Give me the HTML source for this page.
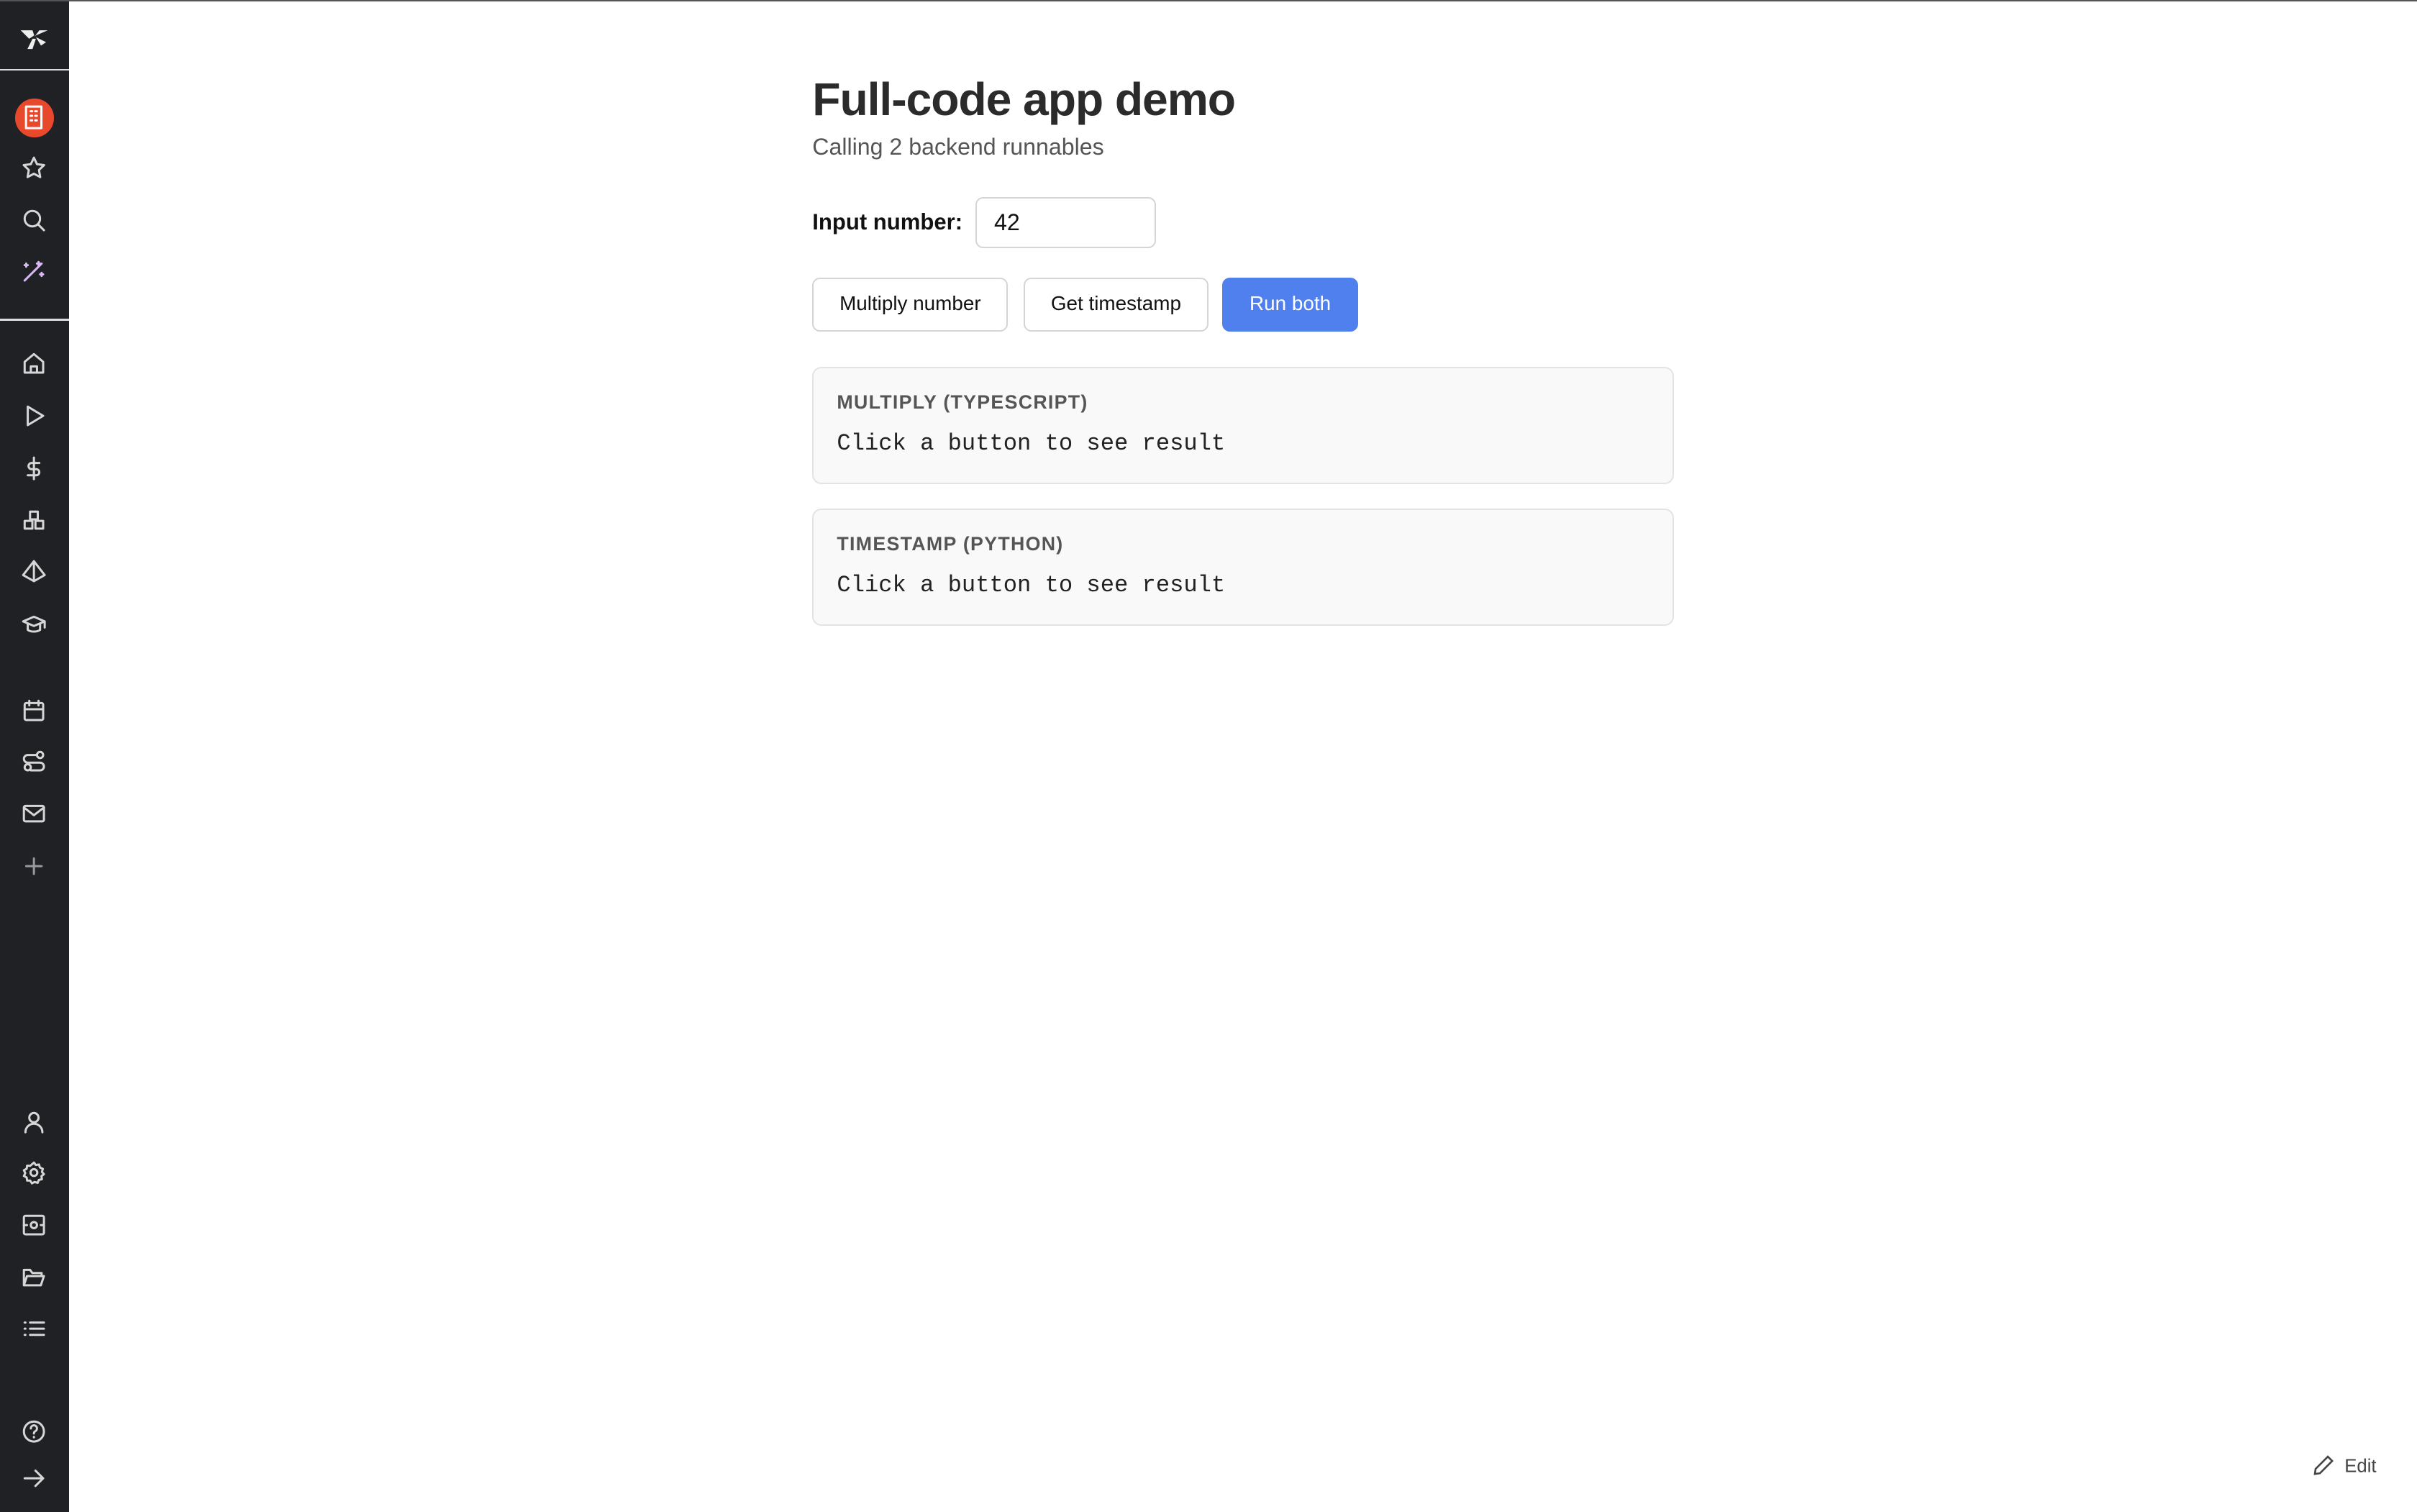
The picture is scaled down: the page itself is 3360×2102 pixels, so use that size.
<!DOCTYPE html>
<html><head><meta charset="utf-8"><style>
html{zoom:2.142857}
*{box-sizing:border-box;margin:0;padding:0}
body{width:1568px;height:980px;background:#fff;font-family:"Liberation Sans",sans-serif;position:relative;overflow:hidden;border-top:1px solid #555}
.sb{position:absolute;left:0;top:0;width:45px;height:980px;background:#202125}
.sb .hr{position:absolute;left:0;width:45px;height:1px;background:#ddd}
.ic{position:absolute;left:14px;width:16px;height:16px}
.ic svg{width:16px;height:16px;fill:none;stroke:#d6d6d6;stroke-width:1.4;stroke-linecap:round;stroke-linejoin:round}
h1{position:absolute;left:527px;top:46px;font-size:30px;font-weight:bold;color:#2b2b2b;letter-spacing:-0.5px}
.sub{position:absolute;left:527px;top:86px;font-size:15px;color:#555}
.lbl{position:absolute;left:527px;top:135px;font-size:14.5px;font-weight:bold;color:#111}
.inp{position:absolute;left:633px;top:127px;width:117px;height:33px;border:1px solid #d5d5d5;border-radius:5px;font-size:15px;padding:7px 11px;color:#111}
.btn{position:absolute;top:179px;height:35px;border:1px solid #d5d5d5;border-radius:5px;font-size:13px;color:#111;text-align:center;line-height:32px;background:#fff}
.card{position:absolute;left:527px;width:559px;height:76px;background:#f9f9f9;border:1px solid #e3e3e3;border-radius:6px}
.card .t{position:absolute;left:15px;top:15px;font-size:12.5px;font-weight:bold;color:#555;letter-spacing:0.6px}
.card .r{position:absolute;left:15px;top:40px;font-family:"Liberation Mono",monospace;font-size:15px;color:#222}
.edit{position:absolute;left:1500px;top:942px;font-size:12px;color:#444}
</style></head><body>
<div class="sb">
<div class="ic" style="top:12px;left:11px;width:22px;height:22px"><svg viewBox="0 0 20 20" style="width:22px;height:22px;stroke:none;fill:#eee"><path d="M2 6 L9 6 L10 9 L7 11 Z M18 6 L11 9 L10 10 L13 6 Z M6 17 L9 11 L11 11 L9 17Z M11 10 L17 13 L14 15 Z"/></svg></div>
<div class="hr" style="top:44px"></div>
<div style="position:absolute;left:10px;top:63px;width:25px;height:25px;border-radius:50%;background:#e8482c"></div>
<div class="ic" style="top:67px;left:16px;width:12px;height:16px"><svg viewBox="0 0 12 16" style="width:12px;height:16px"><rect x="1" y="1" width="10" height="14" stroke="#fff"/><path d="M4 4h1M7 4h1M4 7h1M7 7h1M4 10h1M7 10h1" stroke="#fff"/></svg></div>
<div class="ic" style="top:100px"><svg viewBox="0 0 16 16"><path d="M8 1.5l2 4.2 4.6.6-3.3 3.2.8 4.6L8 11.9 3.9 14.1l.8-4.6L1.4 6.3 6 5.7z"/></svg></div>
<div class="ic" style="top:134px"><svg viewBox="0 0 16 16"><circle cx="7" cy="7" r="5"/><path d="M11 11l3.5 3.5"/></svg></div>
<div class="ic" style="top:167px"><svg viewBox="0 0 16 16" style="stroke:#d9b8f5"><path d="M2 14L13 3M11 2v2M10 3h2M3 3v2M2 4h2M13 9v2M12 10h2"/></svg></div>
<div class="hr" style="top:206px"></div>
<div class="ic" style="top:227px"><svg viewBox="0 0 16 16"><path d="M2 7l6-5 6 5v7H2z M6 14v-4h4v4"/></svg></div>
<div class="ic" style="top:261px"><svg viewBox="0 0 16 16"><path d="M4 2l10 6-10 6z"/></svg></div>
<div class="ic" style="top:295px"><svg viewBox="0 0 16 16"><path d="M8 1v14M11.5 4.5H6.5a2 2 0 000 4h3a2 2 0 010 4H4"/></svg></div>
<div class="ic" style="top:329px"><svg viewBox="0 0 16 16"><rect x="5.5" y="2" width="5" height="5"/><rect x="2" y="8" width="5" height="5"/><rect x="9" y="8" width="5" height="5"/></svg></div>
<div class="ic" style="top:362px"><svg viewBox="0 0 16 16"><path d="M8 1L1 10l7 4 7-4zM8 1v13"/></svg></div>
<div class="ic" style="top:396px"><svg viewBox="0 0 16 16"><path d="M1 6l7-3 7 3-7 3zM4 7.5v4c2 1.5 6 1.5 8 0v-4M15 6v4"/></svg></div>
<div class="ic" style="top:452px"><svg viewBox="0 0 16 16"><rect x="2" y="3" width="12" height="11" rx="1"/><path d="M2 7h12M5 1.5v3M11 1.5v3"/></svg></div>
<div class="ic" style="top:485px"><svg viewBox="0 0 16 16"><circle cx="4" cy="12" r="2"/><circle cx="12" cy="4" r="2"/><path d="M10 4H4a2.5 2.5 0 000 5h8a2.5 2.5 0 010 5H6"/></svg></div>
<div class="ic" style="top:519px"><svg viewBox="0 0 16 16"><rect x="1.5" y="3" width="13" height="10" rx="1"/><path d="M1.5 4l6.5 5 6.5-5"/></svg></div>
<div class="ic" style="top:553px"><svg viewBox="0 0 16 16" style="stroke:#999"><path d="M8 3v10M3 8h10"/></svg></div>
<div class="ic" style="top:719px"><svg viewBox="0 0 16 16"><circle cx="8" cy="5" r="3"/><path d="M2.5 14.5a5.5 5.5 0 0111 0"/></svg></div>
<div class="ic" style="top:752px"><svg viewBox="0 0 16 16"><circle cx="8" cy="8" r="2.2"/><path d="M8 1.5l1.3 1.6 2-.4.6 2 1.9.9-.6 2 1.3 1.4-1.6 1.3.3 2-2 .5-.8 1.9-2-.6L6.7 15l-1.1-1.8-2 0-.3-2-1.8-1 .9-1.9-.9-1.8 1.8-1 .3-2 2 .1z"/></svg></div>
<div class="ic" style="top:786px"><svg viewBox="0 0 16 16"><rect x="1.5" y="2" width="13" height="12" rx="1"/><circle cx="8" cy="8" r="2"/><path d="M1.5 8h2M12.5 8h2"/></svg></div>
<div class="ic" style="top:820px"><svg viewBox="0 0 16 16"><path d="M1.5 13V3h4l1.5 2h6v2M1.5 13l2-6h11l-2 6z"/></svg></div>
<div class="ic" style="top:853px"><svg viewBox="0 0 16 16"><path d="M5.5 4h9M5.5 8h9M5.5 12h9M2 4h.5M2 8h.5M2 12h.5"/></svg></div>
<div class="ic" style="top:920px"><svg viewBox="0 0 16 16"><circle cx="8" cy="8" r="6.5"/><path d="M6 6a2 2 0 113 1.7c-.7.4-1 .8-1 1.6M8 11.5v.3"/></svg></div>
<div class="ic" style="top:950px"><svg viewBox="0 0 16 16"><path d="M2 8h12M9 3l5 5-5 5"/></svg></div>
</div>

<h1>Full-code app demo</h1>
<div class="sub">Calling 2 backend runnables</div>
<div class="lbl">Input number:</div>
<div class="inp">42</div>
<div class="btn" style="left:527px;width:127px">Multiply number</div>
<div class="btn" style="left:664px;width:120px">Get timestamp</div>
<div class="btn" style="left:793px;width:88px;background:#4f80ee;border-color:#4f80ee;color:#fff">Run both</div>
<div class="card" style="top:237px"><div class="t">MULTIPLY (TYPESCRIPT)</div><div class="r">Click a button to see result</div></div>
<div class="card" style="top:329px"><div class="t">TIMESTAMP (PYTHON)</div><div class="r">Click a button to see result</div></div>
<div class="edit"><svg viewBox="0 0 16 16" style="width:15px;height:15px;vertical-align:-3px;fill:none;stroke:#444;stroke-width:1.3;margin-right:6px"><path d="M11 2l3 3-8.5 8.5L2 14l.5-3.5z"/></svg>Edit</div>
</body></html>
